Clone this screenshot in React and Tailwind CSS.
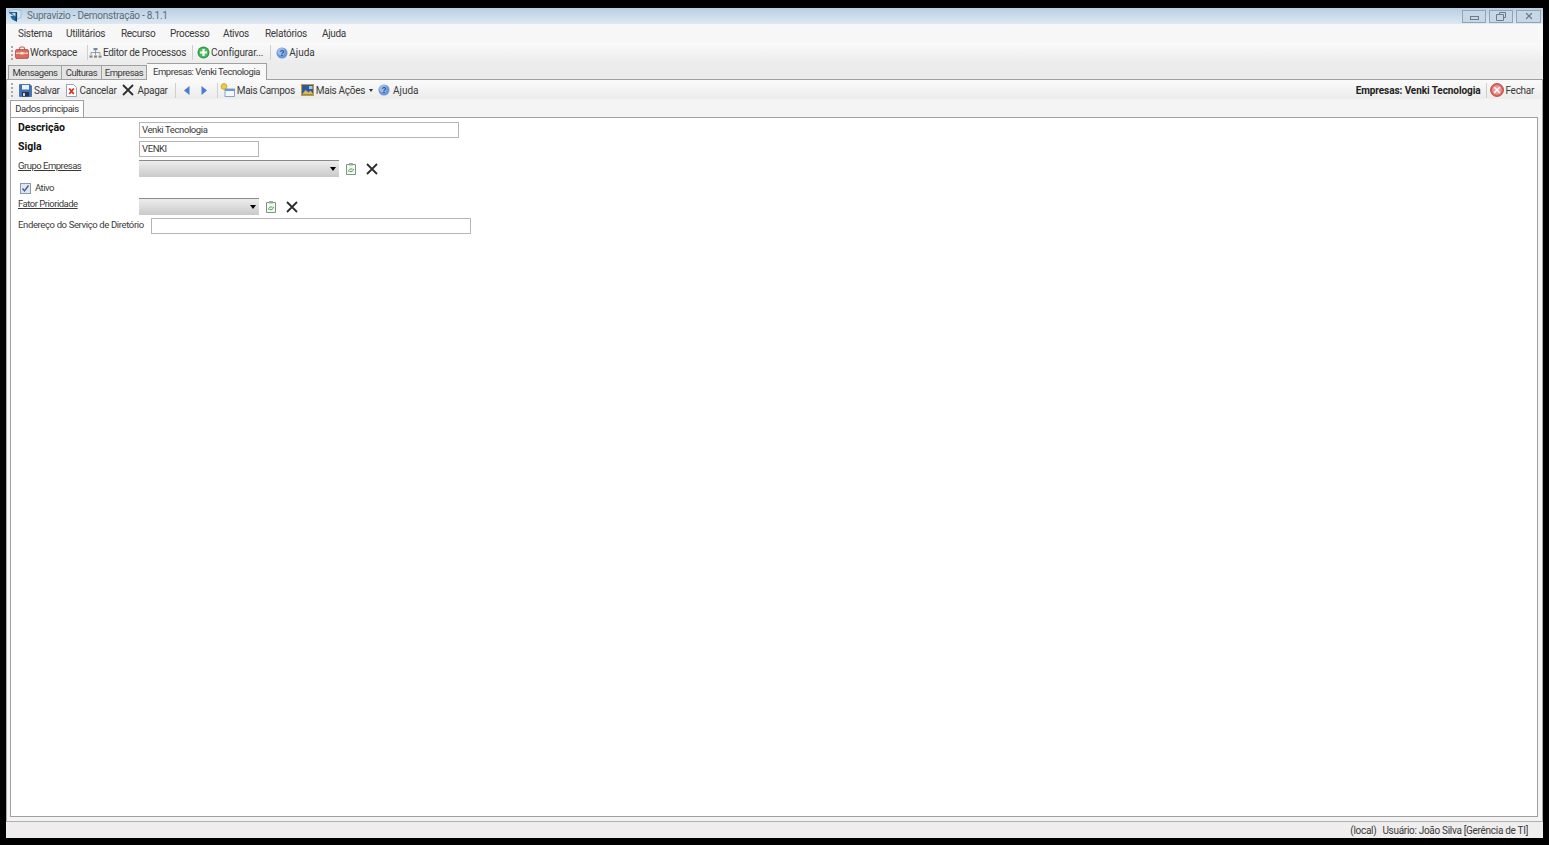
import React from "react";
import { X } from "lucide-react";

const MENUS = [
  ["Sistema", "w-[48px]"],
  ["Utilitários", "w-[55px]"],
  ["Recurso", "w-[49px]"],
  ["Processo", "w-[53px]"],
  ["Ativos", "w-[42px]"],
  ["Relatórios", "w-[57px]"],
  ["Ajuda", "w-[40px]"],
];

function AppLogo() {
  return (
    <svg width="14" height="13" viewBox="0 0 14 13">
      <path d="M1 1.500 7 .5l6 1v7L9 10V3.500L1 3z" fill="#d5e4f0" stroke="#7fa0bb" strokeWidth=".5" />
      <path d="M1 3h8v1H4c1.500 2 3 3.500 5 4v4.500C6 12 3 10 2.500 7H6L1 4z" fill="#1f6a9e" />
      <path d="M9 3.500V12.500L7.500 12V4z" fill="#0f3f66" />
    </svg>
  );
}

function Briefcase() {
  return (
    <svg width="14" height="13" viewBox="0 0 14 13">
      <path d="M4.500 4V2.500C4.500 1.500 5 1 6 1h2c1 0 1.500.5 1.500 1.500V4" fill="none" stroke="#b5655a" strokeWidth="1.100" />
      <rect x=".5" y="3.500" width="13" height="9" rx="1.500" fill="#dc6a5c" stroke="#a8443a" strokeWidth=".7" />
      <rect x="1" y="6.500" width="12" height="1.500" fill="#f3c6b8" />
      <rect x="5.500" y="6" width="3" height="2.500" fill="#f8e8c0" />
    </svg>
  );
}

function OrgChart() {
  return (
    <svg width="13" height="12" viewBox="0 0 13 12">
      <path d="M6.500 3v3M2 8V5.500h9V8M6.500 5.500V8" stroke="#888" fill="none" strokeWidth=".8" />
      <rect x="4.500" y="1" width="4" height="2.200" fill="#6f8aa4" />
      <rect x=".5" y="8.500" width="3" height="2.200" fill="#888" />
      <rect x="5" y="8.500" width="3" height="2.200" fill="#888" />
      <rect x="9.500" y="8.500" width="3" height="2.200" fill="#888" />
    </svg>
  );
}

function PlusCircle() {
  return (
    <svg width="13" height="13" viewBox="0 0 13 13">
      <circle cx="6.500" cy="6.500" r="6" fill="#2e9a45" />
      <circle cx="6.500" cy="6.500" r="4.800" fill="#4dbb62" />
      <path d="M6.500 3v7M3 6.500h7" stroke="#fff" strokeWidth="2.200" />
    </svg>
  );
}

function HelpIcon() {
  return (
    <svg width="12" height="12" viewBox="0 0 13 13">
      <circle cx="6.500" cy="6.500" r="6" fill="#6d97d8" />
      <circle cx="5.500" cy="5" r="4" fill="#9cbdea" />
      <text x="6.500" y="10" textAnchor="middle" fontSize="9" fontWeight="700" fill="#1f4f9c" fontFamily="Liberation Sans, sans-serif">?</text>
    </svg>
  );
}

function SaveIcon() {
  return (
    <svg width="13" height="13" viewBox="0 0 13 13">
      <path d="M.5.500h10.500l1.500 1.500v10.500H.5z" fill="#3f6fb8" stroke="#2a4f8c" strokeWidth=".6" />
      <rect x="3" y="1" width="7" height="4.500" fill="#eef2f8" />
      <rect x="3" y="8" width="7" height="4.500" fill="#26354f" />
      <rect x="4" y="9" width="2" height="3" fill="#c9d4e4" />
    </svg>
  );
}

function CancelIcon() {
  return (
    <svg width="11" height="13" viewBox="0 0 11 13">
      <path d="M.5.500h7l3 3v9H.5z" fill="#fff" stroke="#93a3b8" />
      <path d="M3.200 4.500 7.800 10M7.800 4.500 3.200 10" stroke="#d92f28" strokeWidth="1.800" />
    </svg>
  );
}

function MoreFields() {
  return (
    <svg width="15" height="14" viewBox="0 0 15 14">
      <circle cx="4" cy="3.500" r="3" fill="#ecc94b" stroke="#b7902a" strokeWidth=".6" />
      <rect x="5" y="6" width="9.500" height="7.500" fill="#f4f7fb" stroke="#6f8fb4" strokeWidth=".8" />
      <rect x="5" y="6" width="9.500" height="2" fill="#6a97cf" />
    </svg>
  );
}

function MoreActions() {
  return (
    <svg width="13" height="12" viewBox="0 0 13 12">
      <rect x=".5" y=".5" width="12" height="11" fill="#2c5aa0" stroke="#c69a3a" />
      <path d="M1 10.500 4.500 6l3 2.500 2-2 3 4z" fill="#e0b94f" />
      <rect x="8" y="2" width="3.500" height="3" fill="#a8c6ea" />
    </svg>
  );
}

function CloseCircle() {
  return (
    <svg width="14" height="14" viewBox="0 0 14 14">
      <circle cx="7" cy="7" r="6.500" fill="#d9635f" stroke="#b5302c" strokeWidth=".7" />
      <circle cx="7" cy="7" r="4.800" fill="#ec9a96" />
      <path d="M4.300 4.300l5.400 5.400M9.700 4.300 4.300 9.700" stroke="#fff" strokeWidth="1.500" />
    </svg>
  );
}

function CrossIcon({ size }) {
  return (
    <svg width={size} height={size} viewBox="0 0 12 12">
      <path d="M1 1l10 10M11 1 1 11" stroke="#2e2e2e" strokeWidth="1.800" />
    </svg>
  );
}

function Triangle({ dir }) {
  return (
    <svg width="6" height="9" viewBox="0 0 6 9">
      <path d={dir === "left" ? "M5.500 0v9L0 4.500z" : "M.5 0v9L6 4.500z"} fill="#4a7cd0" />
    </svg>
  );
}

function Grip() {
  return <div className="h-[14px] w-[2px] border-l-2 border-dotted border-[#aaa]" />;
}

function Sep({ className = "" }) {
  return <div className={`h-[15px] w-px shrink-0 bg-[#cfcfcf] ${className}`} />;
}

function ToolItem({ icon, children, className = "" }) {
  return (
    <div className={`flex shrink-0 items-center ${className}`}>
      {icon}
      <span>{children}</span>
    </div>
  );
}

function LookupIcon() {
  return (
    <svg width="10" height="12" viewBox="0 0 10 12">
      <path d="M.5 1.500h9v10h-9z" fill="#f3f7ee" stroke="#7d9488" />
      <rect x="3" y="0" width="4" height="2.500" fill="#9aaca0" />
      <path d="M2.500 8.500c0-2 2-3 4-2.500M7.500 6c0 2-2 3-4 2.500" stroke="#4aa455" fill="none" />
    </svg>
  );
}

function Combo({ className }) {
  return (
    <div className={`flex h-[17px] items-center justify-end border-t border-[#8a8a8a] bg-gradient-to-b from-[#ededed] to-[#cacaca] pr-[3px] ${className}`}>
      <div className="h-0 w-0 border-x-[3.500px] border-t-[4px] border-x-transparent border-t-black" />
    </div>
  );
}

function TextBox({ className, value }) {
  return (
    <div className={`flex h-[16px] items-center border border-[#b5b5b5] bg-white pl-[2px] leading-none tracking-[-0.4px] ${className}`}>
      {value}
    </div>
  );
}

export default function App() {
  return (
    <div className="flex h-[845px] w-[1549px] flex-col overflow-hidden whitespace-nowrap bg-black pb-[7px] pl-[6px] pr-[6px] pt-[8px] text-[10px] tracking-[-0.3px] text-[#3a3a3a] [font-family:Roboto,sans-serif]">
      {/* barra de titulo */}
      <div className="flex h-[16px] shrink-0 items-center bg-gradient-to-b from-[#b8cfe3] to-[#dde8f1] pb-[1px] pl-[2px] tracking-[-0.25px] text-[#5c6b78]">
        <AppLogo />
        <span className="ml-[5px]">Supravizio - Demonstração - 8.1.1</span>
        <div className="ml-auto flex gap-[3px] pr-[2px] pt-[1px]">
          <div className="flex h-[13px] w-[24px] items-end justify-center border border-[#8ea4b8] bg-[#c7d7e5] pb-[2px]">
            <div className="h-[4px] w-[9px] border border-[#6b7b8a]" />
          </div>
          <div className="flex h-[13px] w-[24px] items-center justify-center border border-[#8ea4b8] bg-[#c7d7e5]">
            <svg width="10" height="9" viewBox="0 0 10 9">
              <path d="M3.500 2.500V.5h6v5h-2M.5 2.500h7v6h-7z" fill="none" stroke="#6b7b8a" />
            </svg>
          </div>
          <div className="flex h-[13px] w-[25px] items-center justify-center border border-[#8ea4b8] bg-[#c7d7e5]">
            <X size={10} color="#6b7b8a" strokeWidth={3} />
          </div>
        </div>
      </div>

      {/* menu */}
      <div className="flex h-[19px] shrink-0 items-center bg-[#f7f7f7] pl-[12px] tracking-[-0.3px]">
        {MENUS.map(([label, width]) => (
          <div key={label} className={`${width} shrink-0`}>
            {label}
          </div>
        ))}
      </div>

      {/* barra de ferramentas */}
      <div className="flex h-[20px] shrink-0 items-center bg-gradient-to-b from-[#fafafa] to-[#ececec] pb-[1px] pl-[5px]">
        <Grip />
        <ToolItem icon={<Briefcase />} className="ml-[2px] gap-[1px]">Workspace</ToolItem>
        <Sep className="ml-[10px]" />
        <ToolItem icon={<OrgChart />} className="ml-[1px] gap-[1px]">Editor de Processos</ToolItem>
        <Sep className="ml-[6px]" />
        <ToolItem icon={<PlusCircle />} className="ml-[4px] gap-[1px] tracking-[-0.15px]">Configurar...</ToolItem>
        <Sep className="ml-[7px]" />
        <ToolItem icon={<HelpIcon />} className="ml-[5px] gap-[1px] tracking-normal">Ajuda</ToolItem>
      </div>

      {/* abas */}
      <div className="flex h-[17px] shrink-0 items-end border-b border-[#a0a0a0] bg-[#ececec] pl-[2px] text-[9.5px] leading-none tracking-[-0.45px]">
        <div className="flex h-[14px] w-[54px] items-center justify-center border border-b-0 border-[#a0a0a0] bg-[#e4e4e4]">Mensagens</div>
        <div className="flex h-[14px] w-[40px] items-center justify-center border border-b-0 border-l-0 border-[#a0a0a0] bg-[#e4e4e4]">Culturas</div>
        <div className="flex h-[14px] w-[45px] items-center justify-center border border-b-0 border-l-0 border-[#a0a0a0] bg-[#e4e4e4]">Empresas</div>
        <div className="-mb-px flex h-[17px] w-[120px] items-center justify-center border border-b-0 border-l-0 border-[#a0a0a0] bg-[#f8f8f8] pb-[1px]">Empresas: Venki Tecnologia</div>
      </div>

      {/* corpo */}
      <div className="flex min-h-0 flex-1 flex-col border-l border-r border-[#a8a8a8] bg-[#f4f4f4]">
        <div className="flex h-[19px] shrink-0 items-center bg-gradient-to-b from-[#fafafa] to-[#ececec] pl-[4px] pr-[8px] pt-[1px]">
          <Grip />
          <ToolItem icon={<SaveIcon />} className="ml-[6px] gap-[2px]">Salvar</ToolItem>
          <ToolItem icon={<CancelIcon />} className="ml-[6px] gap-[3px]">Cancelar</ToolItem>
          <ToolItem icon={<CrossIcon size={12} />} className="ml-[6px] gap-[3px]">Apagar</ToolItem>
          <Sep className="ml-[7px]" />
          <div className="ml-[8px] flex items-center gap-[11px]">
            <Triangle dir="left" />
            <Triangle dir="right" />
          </div>
          <Sep className="ml-[10px]" />
          <ToolItem icon={<MoreFields />} className="ml-[2px] gap-[2px]">Mais Campos</ToolItem>
          <ToolItem icon={<MoreActions />} className="ml-[6px] gap-[2px]">Mais Ações</ToolItem>
          <div className="ml-[4px] h-0 w-0 border-x-[2.500px] border-t-[3px] border-x-transparent border-t-[#333]" />
          <ToolItem icon={<HelpIcon />} className="ml-[5px] gap-[3px] tracking-normal">Ajuda</ToolItem>
          <span className="ml-auto font-bold tracking-[-0.08px] text-[#222]">Empresas: Venki Tecnologia</span>
          <Sep className="ml-[5px]" />
          <ToolItem icon={<CloseCircle />} className="ml-[3px] gap-[2px]">Fechar</ToolItem>
        </div>

        {/* aba interna */}
        <div className="flex h-[18px] shrink-0 items-end pl-[3px]">
          <div className="-mb-px flex h-[18px] w-[74px] items-center justify-center border border-b-0 border-[#a0a0a0] bg-white pb-[2px] text-[9.5px] leading-none tracking-[-0.45px]">Dados principais</div>
        </div>

        <div className="ml-[3px] mr-[4px] min-h-0 flex-1 border border-[#a0a0a0] bg-white pl-[7px] pt-[4px] text-[9.5px] leading-none tracking-[-0.5px]">
          <div className="flex h-[19px] items-start">
            <div className="w-[121px] pt-[1px] text-[10.5px] font-bold tracking-normal text-[#111]">Descrição</div>
            <TextBox className="w-[320px]" value="Venki Tecnologia" />
          </div>
          <div className="flex h-[19px] items-start">
            <div className="w-[121px] pt-[1px] text-[10.5px] font-bold tracking-normal text-[#111]">Sigla</div>
            <TextBox className="w-[120px]" value="VENKI" />
          </div>
          <div className="flex h-[21px] items-start">
            <div className="w-[121px] pt-[1px] underline">Grupo Empresas</div>
            <Combo className="w-[200px]" />
            <div className="ml-[7px] mt-[3px]"><LookupIcon /></div>
            <div className="ml-[10px] mt-[3px]"><CrossIcon size={12} /></div>
          </div>
          <div className="flex h-[14px] items-center pl-[2px]">
            <div className="flex h-[11px] w-[11px] items-center justify-center border border-[#8a9bb0] bg-[#dfe6ef]">
              <svg width="9" height="9" viewBox="0 0 9 9"><path d="M1.500 4.500 3.500 7 7.500 1.500" fill="none" stroke="#3f5c8c" strokeWidth="1.300" /></svg>
            </div>
            <span className="ml-[4px]">Ativo</span>
          </div>
          <div className="mt-[3px] flex h-[20px] items-start">
            <div className="w-[121px] pt-[1px] underline">Fator Prioridade</div>
            <Combo className="w-[120px]" />
            <div className="ml-[7px] mt-[3px]"><LookupIcon /></div>
            <div className="ml-[10px] mt-[3px]"><CrossIcon size={12} /></div>
          </div>
          <div className="flex items-start">
            <div className="w-[133px] pt-[2px] tracking-[-0.37px]">Endereço do Serviço de Diretório</div>
            <TextBox className="w-[320px]" value="" />
          </div>
        </div>
        <div className="h-[4px] shrink-0" />
      </div>

      {/* barra de status */}
      <div className="flex h-[17px] shrink-0 items-center justify-end border-t border-[#b0b0b0] bg-[#efeded] pr-[15px]">
        <span>(local)</span>
        <span className="ml-[6px]">Usuário: João Silva [Gerência de TI]</span>
      </div>
    </div>
  );
}
